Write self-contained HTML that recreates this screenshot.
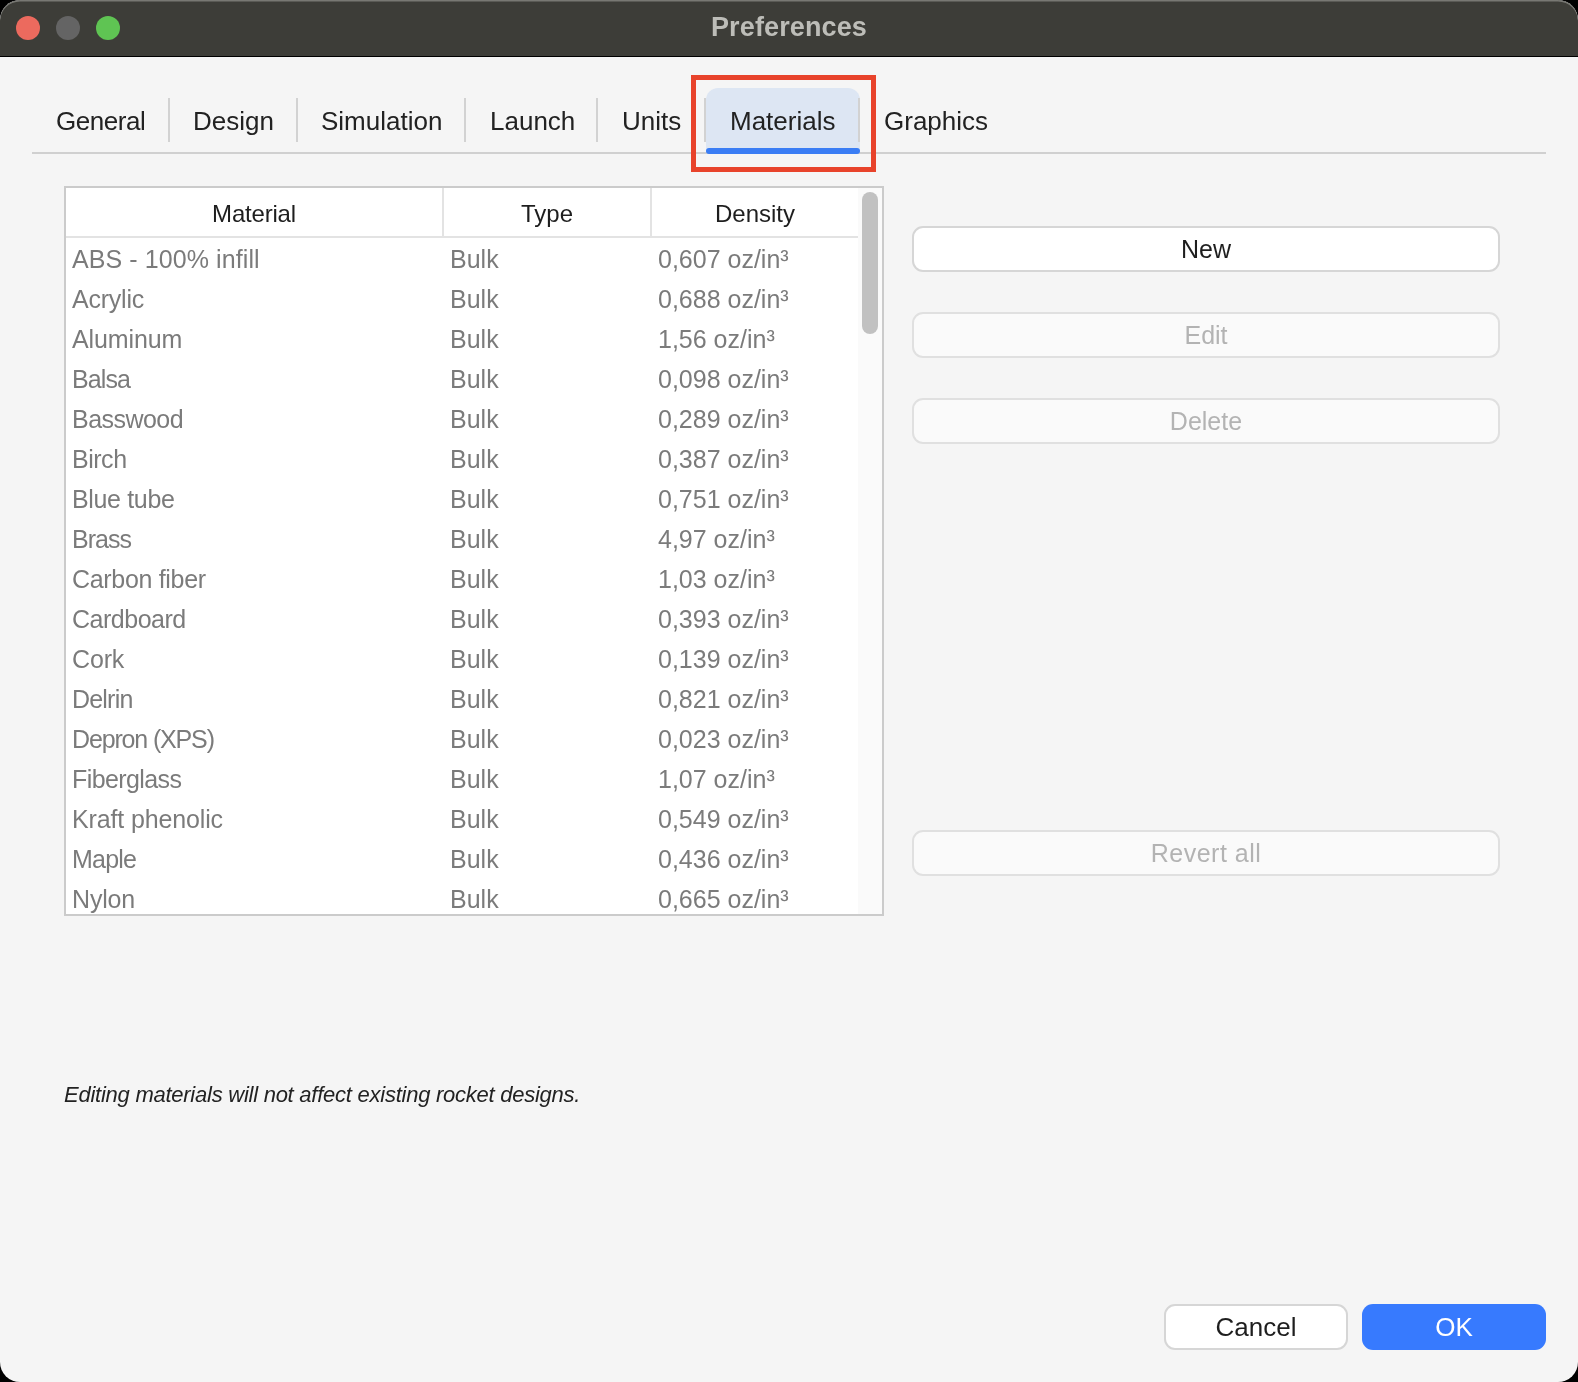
<!DOCTYPE html>
<html>
<head>
<meta charset="utf-8">
<style>
html,body{margin:0;padding:0;width:1578px;height:1382px;overflow:hidden;background:#000;}
*{box-sizing:border-box;}
body{font-family:"Liberation Sans",sans-serif;-webkit-font-smoothing:antialiased;}
#win{will-change:transform;}
#win{position:absolute;left:0;top:0;width:1578px;height:1382px;border-radius:20px;background:#F5F5F5;overflow:hidden;}
#titlebar{position:absolute;left:0;top:0;width:1578px;height:57px;background:#3D3D38;box-shadow:inset 0 1.5px 0 0 #787873;border-bottom:1px solid #000;border-radius:20px 20px 0 0;}
.tl{position:absolute;top:16px;width:24px;height:24px;border-radius:50%;}
#title{position:absolute;left:0;top:-1px;width:1578px;text-align:center;font-weight:bold;font-size:27px;letter-spacing:0.13px;color:#BDBDB8;line-height:56px;}
.abs{position:absolute;white-space:nowrap;}
.tab{position:absolute;top:103px;font-size:26px;line-height:36px;color:#222;white-space:nowrap;}
.sep{position:absolute;top:98px;width:2px;height:44px;background:#D2D2D2;}
#tabline{position:absolute;left:32px;top:152px;width:1514px;height:2px;background:#D0D0D0;}
#seltab{position:absolute;left:706px;top:88px;width:154px;height:64px;background:#DDE6F3;border-radius:12px 12px 0 0;}
#selbar{position:absolute;left:706px;top:148px;width:154px;height:6px;background:#3A7DF4;border-radius:3px;}
#redbox{position:absolute;left:691px;top:75px;width:185px;height:97px;border:5px solid #E8432B;}
#table{position:absolute;left:64px;top:186px;width:820px;height:730px;border:2px solid #CBCBCB;background:#fff;overflow:hidden;}
.hd{position:absolute;top:2px;height:46px;font-size:24px;line-height:48px;color:#1E1E1E;text-align:center;}
.hline{position:absolute;left:0;top:48px;width:792px;height:2px;background:#E3E3E3;}
.vline{position:absolute;top:0;width:2px;height:48px;background:#E3E3E3;}
#track{position:absolute;left:792px;top:0;width:24px;height:728px;background:#FAFAFA;}
#thumb{position:absolute;left:796px;top:4px;width:16px;height:142px;background:#C1C1C1;border-radius:8px;}
.row{position:absolute;left:0;height:40px;width:792px;font-size:25px;line-height:40px;color:#7B7B7B;}
.row span{position:absolute;top:1px;white-space:nowrap;}
.btn{position:absolute;left:912px;width:588px;height:46px;border-radius:11px;border:2px solid #D6D6D6;background:#fff;text-align:center;font-size:25px;line-height:42px;color:#1E1E1E;}
.btn.dis{border-color:#E0E0E0;background:#FAFAFA;color:#B3B3B3;}
#note{position:absolute;left:64px;top:1080px;font-size:22px;line-height:30px;font-style:italic;color:#222;white-space:nowrap;letter-spacing:-0.25px;}
#cancel{position:absolute;left:1164px;top:1304px;width:184px;height:46px;border-radius:11px;border:2px solid #D6D6D6;background:#fff;text-align:center;font-size:26px;line-height:42px;color:#1E1E1E;}
#ok{position:absolute;left:1362px;top:1304px;width:184px;height:46px;border-radius:11px;background:#377AFE;text-align:center;font-size:26px;line-height:46px;color:#fff;}
</style>
</head>
<body>
<div id="win">
  <div id="titlebar">
    <div class="tl" style="left:16px;background:#EC6A5E;"></div>
    <div class="tl" style="left:56px;background:#646464;"></div>
    <div class="tl" style="left:96px;background:#5FC453;"></div>
  </div>
  <div id="title">Preferences</div>

  <div id="tabline"></div>
  <div id="seltab"></div>
  <div id="selbar"></div>
  <div class="tab" style="left:56px;letter-spacing:-0.45px;">General</div>
  <div class="sep" style="left:168px;"></div>
  <div class="tab" style="left:193px;">Design</div>
  <div class="sep" style="left:296px;"></div>
  <div class="tab" style="left:321px;">Simulation</div>
  <div class="sep" style="left:464px;"></div>
  <div class="tab" style="left:490px;">Launch</div>
  <div class="sep" style="left:596px;"></div>
  <div class="tab" style="left:622px;">Units</div>
  <div class="sep" style="left:704px;"></div>
  <div class="tab" style="left:730px;">Materials</div>
  <div class="sep" style="left:858px;"></div>
  <div class="tab" style="left:884px;">Graphics</div>
  <div id="redbox"></div>

  <div id="table">
    <div class="hd" style="left:0;width:376px;letter-spacing:-0.2px;">Material</div>
    <div class="vline" style="left:376px;"></div>
    <div class="hd" style="left:378px;width:206px;">Type</div>
    <div class="vline" style="left:584px;"></div>
    <div class="hd" style="left:586px;width:206px;">Density</div>
    <div class="hline"></div>
    <div class="row" style="top:50px;"><span style="left:6px;letter-spacing:0.09px;">ABS - 100% infill</span><span style="left:384px;">Bulk</span><span style="left:592px;">0,607 oz/in³</span></div>
    <div class="row" style="top:90px;"><span style="left:6px;letter-spacing:-0.23px;">Acrylic</span><span style="left:384px;">Bulk</span><span style="left:592px;">0,688 oz/in³</span></div>
    <div class="row" style="top:130px;"><span style="left:6px;letter-spacing:-0.1px;">Aluminum</span><span style="left:384px;">Bulk</span><span style="left:592px;">1,56 oz/in³</span></div>
    <div class="row" style="top:170px;"><span style="left:6px;letter-spacing:-0.9px;">Balsa</span><span style="left:384px;">Bulk</span><span style="left:592px;">0,098 oz/in³</span></div>
    <div class="row" style="top:210px;"><span style="left:6px;letter-spacing:-0.53px;">Basswood</span><span style="left:384px;">Bulk</span><span style="left:592px;">0,289 oz/in³</span></div>
    <div class="row" style="top:250px;"><span style="left:6px;letter-spacing:-0.48px;">Birch</span><span style="left:384px;">Bulk</span><span style="left:592px;">0,387 oz/in³</span></div>
    <div class="row" style="top:290px;"><span style="left:6px;letter-spacing:-0.35px;">Blue tube</span><span style="left:384px;">Bulk</span><span style="left:592px;">0,751 oz/in³</span></div>
    <div class="row" style="top:330px;"><span style="left:6px;letter-spacing:-1.0px;">Brass</span><span style="left:384px;">Bulk</span><span style="left:592px;">4,97 oz/in³</span></div>
    <div class="row" style="top:370px;"><span style="left:6px;letter-spacing:-0.32px;">Carbon fiber</span><span style="left:384px;">Bulk</span><span style="left:592px;">1,03 oz/in³</span></div>
    <div class="row" style="top:410px;"><span style="left:6px;letter-spacing:-0.49px;">Cardboard</span><span style="left:384px;">Bulk</span><span style="left:592px;">0,393 oz/in³</span></div>
    <div class="row" style="top:450px;"><span style="left:6px;letter-spacing:-0.15px;">Cork</span><span style="left:384px;">Bulk</span><span style="left:592px;">0,139 oz/in³</span></div>
    <div class="row" style="top:490px;"><span style="left:6px;letter-spacing:-0.8px;">Delrin</span><span style="left:384px;">Bulk</span><span style="left:592px;">0,821 oz/in³</span></div>
    <div class="row" style="top:530px;"><span style="left:6px;letter-spacing:-1.15px;">Depron (XPS)</span><span style="left:384px;">Bulk</span><span style="left:592px;">0,023 oz/in³</span></div>
    <div class="row" style="top:570px;"><span style="left:6px;letter-spacing:-0.6px;">Fiberglass</span><span style="left:384px;">Bulk</span><span style="left:592px;">1,07 oz/in³</span></div>
    <div class="row" style="top:610px;"><span style="left:6px;letter-spacing:-0.14px;">Kraft phenolic</span><span style="left:384px;">Bulk</span><span style="left:592px;">0,549 oz/in³</span></div>
    <div class="row" style="top:650px;"><span style="left:6px;letter-spacing:-0.8px;">Maple</span><span style="left:384px;">Bulk</span><span style="left:592px;">0,436 oz/in³</span></div>
    <div class="row" style="top:690px;"><span style="left:6px;letter-spacing:-0.17px;">Nylon</span><span style="left:384px;">Bulk</span><span style="left:592px;">0,665 oz/in³</span></div>
    <div id="track"></div>
    <div id="thumb"></div>
  </div>

  <div class="btn" style="top:226px;">New</div>
  <div class="btn dis" style="top:312px;">Edit</div>
  <div class="btn dis" style="top:398px;">Delete</div>
  <div class="btn dis" style="top:830px;letter-spacing:0.5px;">Revert all</div>

  <div id="note">Editing materials will not affect existing rocket designs.</div>

  <div id="cancel">Cancel</div>
  <div id="ok">OK</div>
</div>
</body>
</html>
